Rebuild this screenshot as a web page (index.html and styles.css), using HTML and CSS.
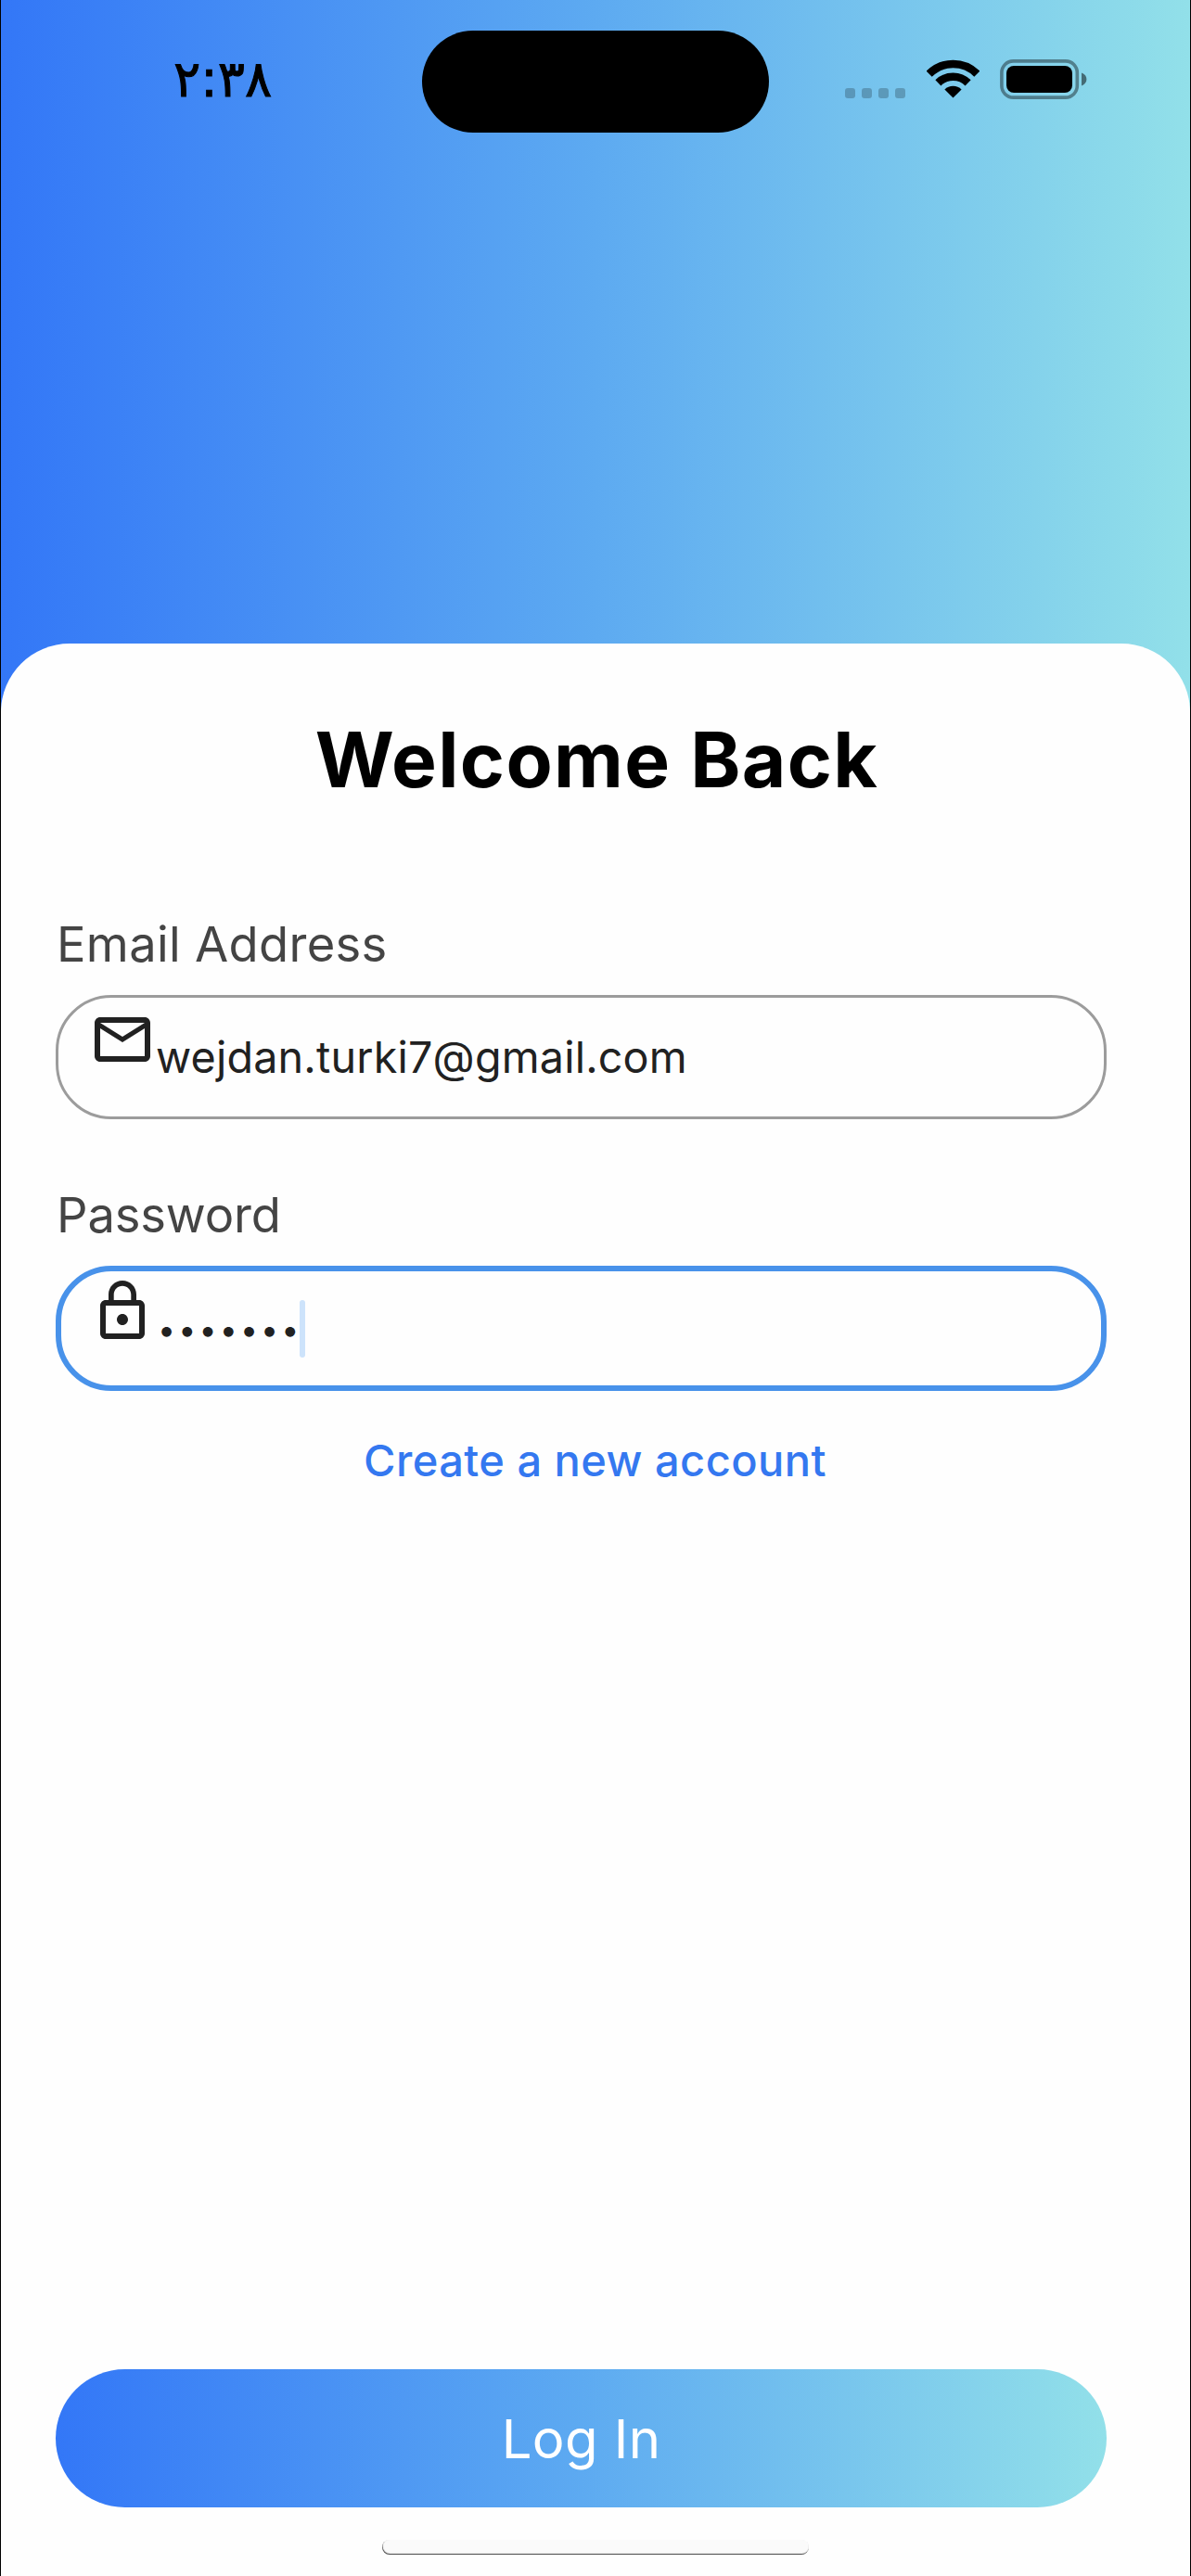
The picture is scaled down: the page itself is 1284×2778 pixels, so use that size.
FILE: index.html
```html
<!DOCTYPE html>
<html lang="en">
<head>
<meta charset="utf-8">
<title>Log In</title>
<link rel="stylesheet" href="styles.css">
</head>
<body>
<main class="screen">
  <header class="status">
    <span class="time">٢:٣٨</span>
    <span class="island"></span>
    <div class="indicators">
      <span class="signal"><i></i><i></i><i></i><i></i></span>
      <svg class="wifi" viewBox="0 0 57 42">
        <path d="M2.7 15.7A36.5 36.5 0 0 1 54.3 15.7M12.4 25.4A22.8 22.8 0 0 1 44.6 25.4" fill="none" stroke="#000" stroke-width="8.6"/>
        <path d="M28.5 41.5L19.4 32.4A12.9 12.9 0 0 1 37.6 32.4Z"/>
      </svg>
      <svg class="battery" viewBox="0 0 94 43">
        <rect x="1.9" y="1.9" width="81.4" height="39.2" rx="12.5" fill="none" stroke="#000" stroke-opacity=".4" stroke-width="3.6"/>
        <rect x="7" y="7" width="71" height="29" rx="8"/>
        <path d="M88 14.6C91.6 16 93.4 18.5 93.4 21.5S91.6 27 88 28.4Z" fill-opacity=".5"/>
      </svg>
    </div>
  </header>
  <section class="panel">
    <h1 class="title">Welcome Back</h1>
    <label class="label">Email Address</label>
    <div class="field">
      <svg class="icon icon-mail" viewBox="0 0 24 24"><path d="M22 6c0-1.1-.9-2-2-2H4c-1.1 0-2 .9-2 2v12c0 1.1.9 2 2 2h16c1.1 0 2-.9 2-2V6zm-2 0l-8 5-8-5h16zm0 12H4V8l8 5 8-5v10z"/></svg>
      <span class="value">wejdan.turki7@gmail.com</span>
    </div>
    <label class="label label-password">Password</label>
    <div class="field field-active">
      <svg class="icon icon-lock" viewBox="0 0 24 24"><path d="M12 17c1.1 0 2-.9 2-2s-.9-2-2-2-2 .9-2 2 .9 2 2 2zm6-9h-1V6c0-2.76-2.24-5-5-5S7 3.24 7 6v2H6c-1.1 0-2 .9-2 2v10c0 1.1.9 2 2 2h12c1.1 0 2-.9 2-2V10c0-1.1-.9-2-2-2zM8.9 6c0-1.71 1.39-3.1 3.1-3.1s3.1 1.39 3.1 3.1v2H8.9V6zM18 20H6V10h12v10z"/></svg>
      <span class="secret">•••••••</span>
      <span class="caret"></span>
    </div>
    <a class="link">Create a new account</a>
    <button class="login">Log In</button>
    <div class="home"></div>
  </section>
</main>
</body>
</html>
```
FILE: styles.css
```css
* { box-sizing: border-box; }
body { margin: 0; font-family: Inter, "Liberation Sans", sans-serif; }
.screen {
  width: 1284px;
  height: 2778px;
  display: flex;
  flex-direction: column;
  border: solid #000;
  border-width: 0 1px;
  background: linear-gradient(90deg, #3377f7, #5daaf1 50%, #92e0e9);
  overflow: hidden;
}
.status {
  height: 694px;
  flex: none;
  display: flex;
  align-items: flex-start;
  padding: 33px 0 0 186px;
}
.time {
  width: 268px;
  padding-top: 22px;
  font: 54.5px/60px "DejaVu Sans", sans-serif;
  -webkit-text-stroke: 1px #000;
}
.island { width: 374px; height: 110px; border-radius: 55px; background: #000; }
.indicators { display: flex; padding: 31px 0 0 82px; }
.signal { display: flex; gap: 7px; padding-top: 31px; }
.signal i { width: 11px; height: 11px; border-radius: 3px; background: rgba(0, 0, 0, .22); }
.wifi { width: 57px; height: 42px; margin-left: 22.5px; }
.battery { width: 94px; height: 43px; margin-left: 22.5px; }
.panel {
  flex: 1;
  display: flex;
  flex-direction: column;
  align-items: flex-start;
  padding: 76px 90px 0 59px;
  border-radius: 74px 74px 0 0;
  background: #fefefe;
}
.title {
  align-self: center;
  margin: 0 0 116px 34px;
  font-size: 82px;
  line-height: 100px;
  font-weight: 700;
  letter-spacing: 1.35px;
}
.label { padding-left: 1px; font-size: 52.5px; line-height: 64px; letter-spacing: .3px; color: #444; }
.label-password { margin-top: 71px; letter-spacing: -.15px; }
.field {
  width: 1133px;
  height: 134px;
  margin-top: 23px;
  display: flex;
  align-items: flex-start;
  border: 3px solid #9c9c9c;
  border-radius: 60px;
  padding-left: 33px;
  color: #212121;
}
.field-active { height: 135px; border: 6px solid #4892ea; padding-left: 30px; }
.icon { width: 72px; height: 72px; flex: none; fill: #212121; }
.icon-mail { margin-top: 9px; }
.icon-lock { margin-top: 7px; }
.value { margin-top: 34px; font-size: 46.7px; line-height: 60px; letter-spacing: .18px; }
.secret { margin: 33px 0 0 2px; width: 153px; font-size: 34px; line-height: 60px; letter-spacing: 3.1px; white-space: nowrap; }
.caret { width: 6px; height: 62px; margin-top: 31px; border-radius: 3px; background: #cde3fb; }
.link {
  align-self: center;
  margin: 47px 0 0 30px;
  font-size: 47px;
  line-height: 56px;
  font-weight: 500;
  letter-spacing: .45px;
  color: #3478f0;
}
.login {
  width: 1133px;
  height: 149px;
  margin: 952px 0 0;
  padding: 0;
  border: 0;
  border-radius: 75px;
  background: linear-gradient(90deg, #3377f7, #5daaf1 50%, #92e0e9);
  color: #fff;
  font: 400 58px/70px Inter, sans-serif;
  letter-spacing: .4px;
}
.home {
  align-self: center;
  width: 460px;
  height: 16px;
  margin: 35px 0 0 31px;
  border-radius: 8px;
  background: #fafafa;
  box-shadow: inset .5px -1px 1px #444;
}
```
